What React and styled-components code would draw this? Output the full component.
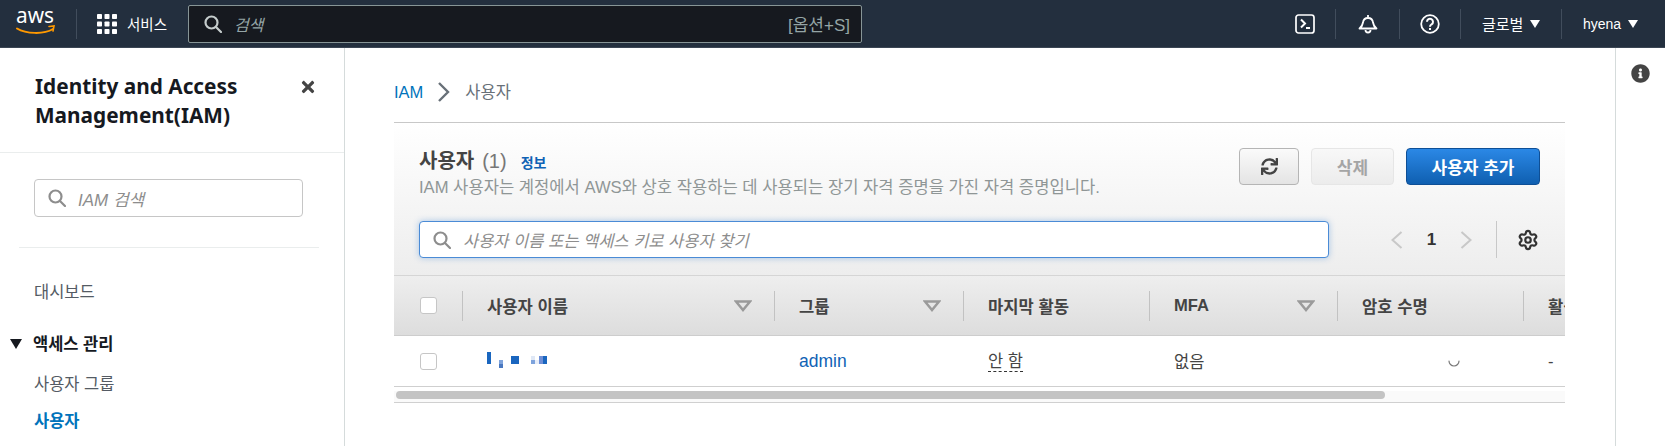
import React from 'react';
import styled, { createGlobalStyle } from 'styled-components';
import { FaTimes, FaInfoCircle, FaSync } from 'react-icons/fa';
import { Settings } from 'lucide-react';

const GlobalStyle = createGlobalStyle`
  html, body {
    margin: 0;
    padding: 0;
    background: #fff;
    overflow: hidden;
  }
  body {
    font-family: "Liberation Sans", "Noto Sans CJK KR", sans-serif;
    color: #16191f;
  }
`;

const Shell = styled.div`
  width: 1665px;
  height: 446px;
  display: flex;
  flex-direction: column;
  overflow: hidden;
`;

/* top bar */
const TopBar = styled.header`
  flex: none;
  height: 47px;
  background: #232f3e;
  border-bottom: 1px solid #3b4654;
  display: flex;
  align-items: center;
  color: #fff;
`;

const LogoBox = styled.div`
  width: 77px;
  height: 30px;
  padding-left: 16px;
  box-sizing: border-box;
  border-right: 1px solid #414d5c;
  display: flex;
  align-items: center;
`;

const ServiceMenu = styled.div`
  width: 111px;
  box-sizing: border-box;
  padding-left: 20px;
  display: flex;
  align-items: center;
  gap: 10px;
  font-size: 14.5px;
`;

const GlobalSearch = styled.div`
  width: 674px;
  height: 38px;
  box-sizing: border-box;
  background: #16191f;
  border: 1px solid #879596;
  border-radius: 2px;
  display: flex;
  align-items: center;
  padding: 0 11px 0 15px;
  gap: 12px;
  color: #95a5a6;
  font-size: 16px;
`;

const SearchHint = styled.span`
  font-style: italic;
  flex: 1;
`;

const Shortcut = styled.span`
  font-size: 17px;
`;

const NavRight = styled.div`
  margin-left: auto;
  display: flex;
  align-items: center;
  height: 30px;
`;

const NavIcon = styled.div`
  width: ${(p) => p.$w}px;
  height: 30px;
  box-sizing: border-box;
  padding-left: ${(p) => (p.$first ? 4 : 0)}px;
  display: flex;
  align-items: center;
  justify-content: center;
  border-left: ${(p) => (p.$first ? 'none' : '1px solid #414d5c')};
`;

const NavMenu = styled.div`
  width: ${(p) => p.$w}px;
  height: 30px;
  box-sizing: border-box;
  padding-left: ${(p) => p.$pad}px;
  border-left: 1px solid #414d5c;
  display: flex;
  align-items: center;
  gap: 7px;
  font-size: ${(p) => p.$size}px;
`;

const NavCaret = styled.i`
  width: 0;
  height: 0;
  border-left: 5px solid transparent;
  border-right: 5px solid transparent;
  border-top: 8px solid #fff;
`;

/* page body */
const Body = styled.div`
  flex: 1;
  min-height: 0;
  display: flex;
`;

const Sidebar = styled.aside`
  flex: none;
  width: 345px;
  box-sizing: border-box;
  border-right: 1px solid #d5dbdb;
`;

const SideHead = styled.div`
  height: 105px;
  box-sizing: border-box;
  padding: 24px 27px 0 35px;
  border-bottom: 1px solid #eaeded;
  display: flex;
  justify-content: space-between;
`;

const SideTitle = styled.h1`
  margin: 0;
  font-family: "Noto Sans", "Noto Sans CJK KR", sans-serif;
  font-size: 20.8px;
  line-height: 29px;
  font-weight: 700;
  color: #16191f;
`;

const CloseBtn = styled.div`
  margin-top: 6px;
  color: #444;
  font-size: 18px;
  line-height: 1;
`;

const SideSearch = styled.div`
  margin: 26px 0 0 34px;
  width: 269px;
  height: 38px;
  box-sizing: border-box;
  border: 1px solid #c6c6c6;
  border-radius: 4px;
  display: flex;
  align-items: center;
  padding-left: 13px;
  gap: 12px;
  color: #8d8d8d;
  font-style: italic;
  font-size: 17px;
`;

const SideDivider = styled.hr`
  margin: 30px 0 0 19px;
  width: 300px;
  height: 1px;
  border: 0;
  background: #eaeded;
`;

const SideLink = styled.a`
  display: block;
  margin: ${(p) => p.$top}px 0 0 34px;
  font-size: 16.5px;
  line-height: 22px;
  color: ${(p) => (p.$active ? '#0073bb' : '#545b64')};
  font-weight: ${(p) => (p.$active ? 700 : 400)};
`;

const SideGroup = styled.div`
  margin: 30px 0 0 10px;
  display: flex;
  align-items: center;
  gap: 11px;
  font-size: 16.5px;
  line-height: 22px;
  font-weight: 700;
  color: #16191f;
`;

const GroupCaret = styled.i`
  width: 0;
  height: 0;
  border-left: 6px solid transparent;
  border-right: 6px solid transparent;
  border-top: 10px solid #16191f;
`;

const Main = styled.main`
  flex: 1;
  min-width: 0;
  padding: 0 50px 0 49px;
`;

const Crumbs = styled.nav`
  height: 75px;
  box-sizing: border-box;
  padding-top: 32px;
  border-bottom: 1px solid #c8c8c8;
  display: flex;
  align-items: flex-start;
  gap: 14px;
  font-size: 16.5px;
  line-height: 24px;
  color: #687078;
`;

const CrumbLink = styled.a`
  color: #0073bb;
`;

const Card = styled.section`
  width: 1171px;
`;

const CardHead = styled.div`
  height: 153px;
  box-sizing: border-box;
  padding: 25px 25px 0 25px;
  background: linear-gradient(#fff, #ededed);
  border-bottom: 1px solid #d5d5d5;
`;

const TitleRow = styled.div`
  display: flex;
  justify-content: space-between;
  align-items: flex-start;
`;

const Title = styled.h2`
  margin: 0;
  font-size: 20px;
  line-height: 26px;
  font-weight: 700;
  color: #444;
  display: flex;
  align-items: baseline;
`;

const Count = styled.span`
  font-weight: 400;
  color: #777;
  margin-left: 8px;
`;

const InfoLink = styled.a`
  margin-left: 14px;
  font-size: 14px;
  font-weight: 700;
  color: #0f62b5;
`;

const Desc = styled.p`
  margin: 0;
  font-size: 16.6px;
  line-height: 24px;
  color: #8f9696;
`;

const Actions = styled.div`
  display: flex;
  gap: 12px;
`;

const Button = styled.button`
  height: 37px;
  width: ${(p) => p.$w}px;
  box-sizing: border-box;
  padding: 0;
  border-radius: 4px;
  font: 700 17px "Liberation Sans", "Noto Sans CJK KR", sans-serif;
  display: flex;
  align-items: center;
  justify-content: center;
  border: 1px solid ${(p) => (p.$kind === 'primary' ? '#0e4f96' : p.$kind === 'off' ? '#e6e6e6' : '#b5b5b5')};
  color: ${(p) => (p.$kind === 'primary' ? '#fff' : p.$kind === 'off' ? '#a5a5a5' : '#444')};
  background: ${(p) =>
    p.$kind === 'primary'
      ? 'linear-gradient(#2b88e6, #0f5fb0)'
      : p.$kind === 'off'
        ? 'linear-gradient(#f8f8f8, #ececec)'
        : 'linear-gradient(#fafafa, #e4e4e4)'};
`;

const FilterRow = styled.div`
  margin-top: 21px;
  display: flex;
  align-items: center;
`;

const FilterInput = styled.div`
  width: 910px;
  height: 37px;
  box-sizing: border-box;
  background: #fff;
  border: 1px solid #4a8bd6;
  border-radius: 4px;
  box-shadow: 0 0 6px rgba(74, 139, 214, 0.45);
  display: flex;
  align-items: center;
  padding-left: 13px;
  gap: 12px;
  color: #8d8d8d;
  font-style: italic;
  font-size: 16.5px;
`;

const Pager = styled.div`
  margin-left: 62px;
  display: flex;
  align-items: center;
  height: 37px;
`;

const PageNum = styled.span`
  width: 57px;
  text-align: center;
  font-size: 17px;
  font-weight: 700;
  color: #333;
`;

const PagerSep = styled.i`
  width: 1px;
  height: 37px;
  background: #c8c8c8;
  margin: 0 20px 0 24px;
`;

const TableWrap = styled.div`
  overflow: hidden;
`;

const columns = '68px 312px 189px 186px 188px 186px 42px';

const HeadRow = styled.div`
  height: 60px;
  box-sizing: border-box;
  display: grid;
  grid-template-columns: ${columns};
  align-items: center;
  background: linear-gradient(#eeeeee, #dddddd);
  border-bottom: 1px solid #cdcdcd;
`;

const HeadCell = styled.div`
  height: 30px;
  box-sizing: border-box;
  padding: 0 22px 0 24px;
  border-left: 1px solid #c2c2c2;
  display: flex;
  align-items: center;
  justify-content: space-between;
  font-size: 16.6px;
  font-weight: 700;
  color: #444;
  white-space: nowrap;
  overflow: hidden;
`;

const CheckCell = styled.div`
  padding-left: 26px;
  display: flex;
  align-items: center;
`;

const Check = styled.i`
  display: block;
  width: 17px;
  height: 17px;
  box-sizing: border-box;
  background: #fff;
  border: 1px solid #c6c6c6;
  border-radius: 3px;
`;

const DataRow = styled.div`
  height: 51px;
  box-sizing: border-box;
  display: grid;
  grid-template-columns: ${columns};
  align-items: center;
  border-bottom: 1px solid #cfcfcf;
  font-size: 16.5px;
  color: #444;
`;

const DataCell = styled.div`
  padding-left: 25px;
  white-space: nowrap;
  display: flex;
  align-items: center;
`;

const SpinnerCell = styled.div`
  padding-right: 62px;
  display: flex;
  justify-content: flex-end;
`;

const GroupLink = styled.a`
  color: #0f62b5;
  font-size: 17.5px;
`;

const Dashed = styled.span`
  line-height: 20px;
  border-bottom: 1px dashed #333;
`;

const ScrollTrack = styled.div`
  margin-top: 4px;
  height: 11px;
  padding: 0 0 0 2px;
  background: #fafafa;
  border-bottom: 1px solid #d0d0d0;
  box-sizing: content-box;
`;

const ScrollThumb = styled.div`
  width: 989px;
  height: 8px;
  border-radius: 4px;
  background: #c4c4c4;
`;

const HelpRail = styled.aside`
  flex: none;
  width: 50px;
  box-sizing: border-box;
  border-left: 1px solid #d5dbdb;
  padding-top: 16px;
  display: flex;
  justify-content: center;
  align-items: flex-start;
  color: #444;
  font-size: 19px;
  line-height: 1;
`;

const AwsLogo = () => (
  <svg width="40" height="28" viewBox="0 0 40 28">
    <text
      x="0"
      y="13"
      fontFamily="Noto Sans, sans-serif"
      fontSize="22"
      fill="#fff"
      textLength="38"
      lengthAdjust="spacingAndGlyphs"
    >
      aws
    </text>
    <path d="M1 18.5c9 5.5 27 6 36 .5" fill="none" stroke="#ff9900" strokeWidth="2" strokeLinecap="round" />
    <path d="M33 16.5l5-.5-1 5" fill="none" stroke="#ff9900" strokeWidth="1.6" strokeLinecap="round" />
  </svg>
);

const GridIcon = () => (
  <svg width="20" height="20" viewBox="0 0 20 20" fill="#fff">
    {[0, 7.5, 15].map((y) =>
      [0, 7.5, 15].map((x) => <rect key={`${x}-${y}`} x={x} y={y} width="5" height="5" rx="0.8" />)
    )}
  </svg>
);

const SearchIcon = ({ size = 18, color = '#8d8d8d' }) => (
  <svg width={size} height={size} viewBox="0 0 18 18" fill="none" stroke={color} strokeWidth="2.2">
    <circle cx="7.5" cy="7.5" r="6" />
    <path d="M12 12l5 5" strokeLinecap="round" />
  </svg>
);

const TerminalIcon = () => (
  <svg width="20" height="20" viewBox="0 0 20 20" fill="none" stroke="#fff" strokeWidth="1.7">
    <rect x="1" y="1" width="18" height="18" rx="2.5" />
    <path d="M6 5.5l4 4-4 4" strokeWidth="2" />
    <path d="M11 14h4" strokeWidth="2" />
  </svg>
);

const BellIcon = () => (
  <svg width="20" height="20" viewBox="0 0 20 20" fill="none" stroke="#fff" strokeWidth="1.8">
    <path d="M10 1v2" />
    <path d="M1.5 14.5c2-1.5 3-3 3.5-6 .4-3 2.5-4.5 5-4.5s4.6 1.5 5 4.5c.5 3 1.5 4.5 3.5 6z" strokeLinejoin="round" />
    <path d="M7.5 16a2.5 2.5 0 0 0 5 0" />
  </svg>
);

const HelpIcon = () => (
  <svg width="20" height="20" viewBox="0 0 20 20" fill="none" stroke="#fff" strokeWidth="1.8">
    <circle cx="10" cy="10" r="8.8" />
    <path d="M7 7.8a3 3 0 1 1 4.6 2.5c-1 .7-1.6 1.3-1.6 2.5" strokeWidth="2" />
    <path d="M10 14v2" strokeWidth="2" />
  </svg>
);

const Chevron = ({ right }) => (
  <svg width="12" height="20" viewBox="0 0 12 20" fill="none" stroke="#c8c8c8" strokeWidth="2">
    <path d={right ? 'M1.5 2l9 8-9 8' : 'M10.5 2l-9 8 9 8'} />
  </svg>
);

const FilterIcon = () => (
  <svg width="18" height="12" viewBox="0 0 18 12" fill="none" stroke="#9a9a9a" strokeWidth="2.4">
    <path d="M2 1.5h14L9 10z" />
  </svg>
);

const Spinner = () => (
  <svg width="14" height="14" viewBox="0 0 14 14" fill="none" stroke="#777" strokeWidth="1.2">
    <path d="M2 7a5 5 0 0 0 10 0" strokeLinecap="round" />
  </svg>
);

// redacted user name in the shot, kept as the blocks it shows
const RedactedName = () => (
  <svg width="62" height="18" viewBox="0 0 62 18">
    <rect x="0" y="0" width="4" height="12" fill="#1a66bf" />
    <rect x="12" y="8" width="4" height="4" fill="#7ea3dc" />
    <rect x="12" y="12" width="4" height="4" fill="#4a78c0" />
    <rect x="24" y="4" width="8" height="8" fill="#1a66bf" />
    <rect x="44" y="4" width="4" height="4" fill="#dfe8f6" />
    <rect x="44" y="8" width="4" height="4" fill="#7ea3dc" />
    <rect x="48" y="8" width="4" height="4" fill="#e8eef9" />
    <rect x="52" y="4" width="4" height="8" fill="#6f8fd6" />
    <rect x="56" y="4" width="4" height="8" fill="#1a66bf" />
  </svg>
);

const headers = [
  { label: '사용자 이름', filter: true },
  { label: '그룹', filter: true },
  { label: '마지막 활동' },
  { label: 'MFA', filter: true },
  { label: '암호 수명' },
  { label: '활성 키 수명' },
];

const App = () => (
  <Shell>
    <GlobalStyle />
    <TopBar>
      <LogoBox>
        <AwsLogo />
      </LogoBox>
      <ServiceMenu>
        <GridIcon />
        서비스
      </ServiceMenu>
      <GlobalSearch>
        <SearchIcon size={18} color="#c5cccc" />
        <SearchHint>검색</SearchHint>
        <Shortcut>[옵션+S]</Shortcut>
      </GlobalSearch>
      <NavRight>
        <NavIcon $first $w={64}>
          <TerminalIcon />
        </NavIcon>
        <NavIcon $w={64}>
          <BellIcon />
        </NavIcon>
        <NavIcon $w={61}>
          <HelpIcon />
        </NavIcon>
        <NavMenu $w={101} $pad={21} $size={15}>
          글로벌 <NavCaret />
        </NavMenu>
        <NavMenu $w={104} $pad={21} $size={14}>
          hyena <NavCaret />
        </NavMenu>
      </NavRight>
    </TopBar>
    <Body>
      <Sidebar>
        <SideHead>
          <SideTitle>
            Identity and Access
            <br />
            Management(IAM)
          </SideTitle>
          <CloseBtn>
            <FaTimes />
          </CloseBtn>
        </SideHead>
        <SideSearch>
          <SearchIcon />
          IAM 검색
        </SideSearch>
        <SideDivider />
        <SideLink $top={33}>대시보드</SideLink>
        <SideGroup>
          <GroupCaret />
          액세스 관리
        </SideGroup>
        <SideLink $top={18}>사용자 그룹</SideLink>
        <SideLink $top={15} $active>
          사용자
        </SideLink>
      </Sidebar>
      <Main>
        <Crumbs>
          <CrumbLink>IAM</CrumbLink>
          <svg width="14" height="24" viewBox="0 0 14 24" fill="none" stroke="#687078" strokeWidth="2.4">
            <path d="M2 3l9 9-9 9" />
          </svg>
          사용자
        </Crumbs>
        <Card>
          <CardHead>
            <TitleRow>
              <div>
                <Title>
                  사용자<Count>(1)</Count>
                  <InfoLink>정보</InfoLink>
                </Title>
                <Desc>IAM 사용자는 계정에서 AWS와 상호 작용하는 데 사용되는 장기 자격 증명을 가진 자격 증명입니다.</Desc>
              </div>
              <Actions>
                <Button $w={60}>
                  <FaSync size={17} />
                </Button>
                <Button $w={83} $kind="off">
                  삭제
                </Button>
                <Button $w={134} $kind="primary">
                  사용자 추가
                </Button>
              </Actions>
            </TitleRow>
            <FilterRow>
              <FilterInput>
                <SearchIcon />
                사용자 이름 또는 액세스 키로 사용자 찾기
              </FilterInput>
              <Pager>
                <Chevron />
                <PageNum>1</PageNum>
                <Chevron right />
                <PagerSep />
                <Settings size={22} color="#333" strokeWidth={2.4} />
              </Pager>
            </FilterRow>
          </CardHead>
          <TableWrap>
            <HeadRow>
              <CheckCell>
                <Check />
              </CheckCell>
              {headers.map((h) => (
                <HeadCell key={h.label}>
                  {h.label}
                  {h.filter && <FilterIcon />}
                </HeadCell>
              ))}
            </HeadRow>
            <DataRow>
              <CheckCell>
                <Check />
              </CheckCell>
              <DataCell>
                <RedactedName />
              </DataCell>
              <DataCell>
                <GroupLink>admin</GroupLink>
              </DataCell>
              <DataCell>
                <Dashed>안 함</Dashed>
              </DataCell>
              <DataCell>없음</DataCell>
              <SpinnerCell>
                <Spinner />
              </SpinnerCell>
              <DataCell>-</DataCell>
            </DataRow>
          </TableWrap>
          <ScrollTrack>
            <ScrollThumb />
          </ScrollTrack>
        </Card>
      </Main>
      <HelpRail>
        <FaInfoCircle />
      </HelpRail>
    </Body>
  </Shell>
);

export default App;
